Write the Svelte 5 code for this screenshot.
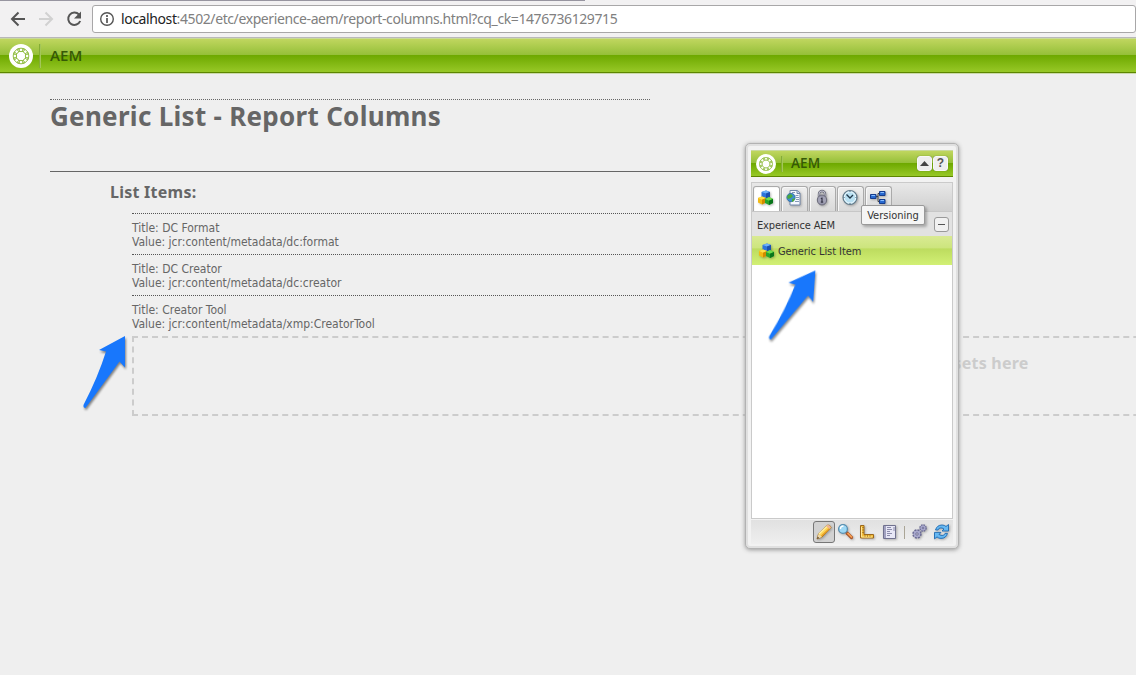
<script>
  const items = [
    ['DC Format', 'jcr:content/metadata/dc:format'],
    ['DC Creator', 'jcr:content/metadata/dc:creator'],
    ['Creator Tool', 'jcr:content/metadata/xmp:CreatorTool']
  ];
  const tabs = ['cubes', 'page', 'lock', 'clock', 'tree'];
</script>

{#snippet logo(size)}
  <svg width={size} height={size} viewBox="0 0 24 24">
    <circle cx="12" cy="12" r="12" fill="#fff" />
    <g fill="none" stroke="#83b52b" stroke-width=".9">
      {#each [0, 45, 90, 135, 180, 225, 270, 315] as a}
        <ellipse cx="12" cy="5.900" rx="3.600" ry="1.700" transform="rotate({a} 12 12)" />
      {/each}
    </g>
  </svg>
{/snippet}

{#snippet icon(name)}
  <svg class="icon" width="18" height="18" viewBox="0 0 18 18">
    {#if name === 'cubes'}
      <path d="M4.500 3l4.500-1.500 4 1.500v5l-4 2-4.500-2z" fill="#2c74dc" />
      <path d="M4.500 3l4.500-1.500 4 1.500-4 1.600z" fill="#6eb0fa" />
      <path d="M9 4.600L13 3v5l-4 2z" fill="#1b4fae" />
      <path d="M1 9l4-1.500 4 1.500v4.500l-4 2-4-2z" fill="#f2b913" />
      <path d="M1 9l4-1.500 4 1.500-4 1.700z" fill="#ffe04a" />
      <path d="M5 10.700l4-1.700v4.500l-4 2z" fill="#d28a00" />
      <path d="M8 10l4-2 4 2v4l-4 2-4-2z" fill="#27a52a" />
      <path d="M8 10l4-2 4 2-4 1.800z" fill="#6fdc4e" />
      <path d="M12 11.800l4-1.800v4l-4 2z" fill="#08751b" />
    {:else if name === 'page'}
      <path d="M5 1.500h7.500l2.500 2.500v12H5z" fill="#f5f8ff" stroke="#7186aa" />
      <path d="M12 1.500v3h3" fill="#cbd8ec" stroke="#7186aa" />
      <path d="M7 3.500h3M10.500 6.500h3M11 8.500h3M11 10.500h3M10 12.500h4" stroke="#8498b8" />
      <circle cx="6" cy="8.500" r="4.200" fill="#3c8ed2" stroke="#2c6299" stroke-width=".7" />
      <path d="M3 6l3-1 2 2-2 2-3 1-1-2zM7 10l3-1-1 3-2 1z" fill="#4ba83e" />
    {:else if name === 'lock'}
      <path d="M6 8V5a3 3 0 0 1 6 0v3" fill="none" stroke="#70717f" stroke-width="2.400" />
      <path d="M6 8V5a3 3 0 0 1 6 0v3" fill="none" stroke="#c0c0ce" />
      <ellipse cx="9" cy="11" rx="4.700" ry="5" fill="#9595aa" stroke="#686877" />
      <path d="M5.500 9h7M5 11h8M5.500 13h7" stroke="#c2c2d0" stroke-width=".6" />
      <path d="M9 8.500v5M7.800 9.500h1.500M7.800 13.200h2.400" stroke="#343446" stroke-width="1.200" />
    {:else if name === 'clock'}
      <circle cx="9" cy="8.500" r="7" fill="#b9e0f2" stroke="#627988" stroke-width="1.200" />
      <circle cx="9" cy="8.500" r="5.700" fill="none" stroke="#effaff" />
      <path d="M5.500 5.500L9 9l3-3" fill="none" stroke="#21384a" stroke-width="1.300" />
      <path d="M9 2v1M9 14v1M2.500 8.500h1M14.500 8.500h1" stroke="#496577" />
    {:else if name === 'tree'}
      <path d="M6 7.500h3M9 4.500v8h3M9 4.500h3" fill="none" stroke="#444" />
      <path d="M1.500 5.500h5.500v4H1.500zM10.500 2.500h5.500v4h-5.500zM10.500 10.500h5.500v4h-5.500z" fill="#2869d0" stroke="#153c8c" />
      <path d="M2.500 6.500h3.500M11.500 3.500h3.500M11.500 11.500h3.500" stroke="#87bdff" />
    {:else if name === 'pencil'}
      <path d="M2 16l1.500-5L12.500 2Q15 1.500 16 4.500L7 14z" fill="#ffd453" stroke="#a76d14" stroke-width=".9" />
      <path d="M4 11L13 2.500" stroke="#fff0a3" stroke-width="1.400" />
      <path d="M6.500 13L15 5" stroke="#e49d27" stroke-width="1.400" />
      <path d="M12.500 2Q15 1.500 16 4.500l-1.500 1.400-3.300-2.700z" fill="#edb494" />
      <path d="M2 16l1.500-5L7 14z" fill="#ead6ad" />
      <path d="M2 16l.700-2.200 1.500 1.200z" fill="#43301f" />
    {:else if name === 'zoom'}
      <path d="M10 10l4.500 4.500" stroke="#a7582e" stroke-width="3.200" stroke-linecap="round" />
      <path d="M10.500 10l4.500 4.500" stroke="#fba052" stroke-width="1.700" />
      <circle cx="6" cy="6" r="4.400" fill="#9dd8f5" stroke="#588eaf" stroke-width="1.300" />
      <path d="M3.500 6q0-3 3-3" fill="none" stroke="#fff" stroke-width="1.300" />
    {:else if name === 'ruler'}
      <path d="M1.500 2.500h3.500v9h9.500v3.500h-13z" fill="#f4bf3d" stroke="#9d691c" />
      <path d="M2.500 4v10h11" fill="none" stroke="#ffe797" />
      <path d="M3.500 4.500h1M3.500 7h1M3.500 9.500h1M6 12.500v1M8.500 12.500v1M11 12.500v1" stroke="#81571a" />
    {:else if name === 'sheet'}
      <path d="M2.500 2.500h12v13h-12z" fill="#e7e7f6" stroke="#70718f" />
      <path d="M4 3v12" stroke="#a2a2c0" stroke-width="2" />
      <path d="M6 4.500h4M6 6.500h5M6 8.500h3M6 10.500h5M6 12.500h3M13 4v4" stroke="#8c8cab" />
    {:else if name === 'gears'}
      <g fill="#a9a9ce" stroke="#6a6a94">
        <circle cx="6" cy="11" r="3.700" stroke-width="2" stroke-dasharray="1.900 1" />
        <circle cx="12" cy="5" r="2.800" stroke-width="2" stroke-dasharray="1.500 .700" />
        <circle cx="6" cy="11" r="3.200" stroke="none" />
        <circle cx="12" cy="5" r="2.500" stroke="none" />
        <circle cx="6" cy="11" r="1.200" fill="#eee" />
        <circle cx="12" cy="5" r=".8" fill="#eee" />
      </g>
    {:else}
      <g fill="#66b8f2" stroke="#1d69b1" stroke-width=".9" stroke-linejoin="round">
        {#each [0, 180] as a}
          <path d="M2.500 7Q4 2 9 2q2.500 0 4 1.500L15.500 1.500V8H9l2-2Q9 4.500 7 5 5.500 5.300 5 7z" transform="rotate({a} 8.500 8.700)" />
        {/each}
      </g>
    {/if}
  </svg>
{/snippet}

{#snippet arrow()}
  <svg width="60" height="82" viewBox="0 0 60 82">
    <path d="M50 6L24 20l7 1.500Q23 47 8.500 75q-.5 3 2 3Q31 50 44.500 31.500l5.500 6z" fill="#1877fc" />
  </svg>
{/snippet}

<div class="page">
  <header class="browser">
    <div class="strip"></div>
    <svg class="nav" width="84" height="20" viewBox="0 0 84 20">
      <g fill="none" stroke-width="2">
        <path d="M16 10H3M9.500 3.500L3 10l6.500 6.500" stroke="#555" />
        <path d="M30 10h13M36.500 3.500L43 10l-6.500 6.500" stroke="#d1d1d1" />
        <path d="M70 5.500a6.200 6.200 0 1 0 1.200 6.500" stroke="#555" />
      </g>
      <path d="M72 2.500v7h-7z" fill="#555" />
    </svg>
    <div class="address">
      <svg width="16" height="16" viewBox="0 0 16 16">
        <circle cx="8" cy="8" r="6.300" fill="none" stroke="#555" stroke-width="1.400" />
        <path d="M8 7v5M8 4v2" stroke="#555" stroke-width="1.700" />
      </svg>
      <span class="url"><b>localhost</b>:4502/etc/experience-aem/report-columns.html?cq_ck=1476736129715</span>
    </div>
  </header>
  <div class="brand">{@render logo(24)}<i></i><strong>AEM</strong></div>

  <main>
    <h1>Generic List - Report Columns</h1>
    <section>
      <h2>List Items:</h2>
      <ul>
        {#each items as [title, value]}
          <li><div>Title: {title}</div><div>Value: {value}</div></li>
        {/each}
      </ul>
      <div class="drop"><span>Drag components or assets here</span></div>
    </section>
  </main>

  <aside class="kick">
    <div class="brand small">
      {@render logo(20)}<i></i><strong>AEM</strong>
      <button class="up" aria-label="Collapse"><svg width="9" height="5"><path d="M0 5L4.500 0 9 5z" fill="#444" /></svg></button>
      <button>?</button>
    </div>
    <div class="body">
      <div class="tabs">
        {#each tabs as t, i}<div class="tab" class:active={i === 0}>{@render icon(t)}</div>{/each}
      </div>
      <div class="group"><span>Experience AEM</span><button aria-label="Collapse group"><em></em></button></div>
      <div class="entry">{@render icon('cubes')}<span>Generic List Item</span></div>
    </div>
    <footer>
      <div class="tool on">{@render icon('pencil')}</div>
      <div class="tool">{@render icon('zoom')}</div>
      <div class="tool">{@render icon('ruler')}</div>
      <div class="tool">{@render icon('sheet')}</div>
      <i></i>
      <div class="tool">{@render icon('gears')}</div>
      <div class="tool">{@render icon('refresh')}</div>
    </footer>
    <div class="tip">Versioning</div>
  </aside>
  <div class="arrow a1">{@render arrow()}</div>
  <div class="arrow a2">{@render arrow()}</div>
</div>

<style>
  * { box-sizing: border-box; }
  .page { position: relative; width: 1136px; height: 675px; overflow: hidden; background: #efefef; color: #666; font-family: "DejaVu Sans Condensed", "DejaVu Sans", sans-serif; font-stretch: condensed; }
  svg { display: block; flex: none; }
  .browser { position: relative; height: 38px; background: #f2f1f2; border-bottom: 1px solid #b9b8b9; display: flex; align-items: flex-start; }
  .strip { position: absolute; left: 0; top: 0; width: 585px; height: 1px; background: #9795a0; }
  .nav { margin: 9px 0 0 9px; width: 84px; }
  .address { margin: 5px 0 0 -1px; width: 1060px; height: 28px; background: #fff; border: 1px solid #a8a7a8; border-radius: 3px; display: flex; align-items: center; padding: 0 0 0 6px; gap: 6px; }
  .url { font: 14px/20px "Noto Sans", sans-serif; letter-spacing: -.4px; color: #808080; white-space: nowrap; }
  .url b { font-weight: 400; color: #222; }
  .brand { height: 35px; display: flex; align-items: center; padding-left: 9px; background: linear-gradient(#c0d65f 0, #94bf38 49%, #6ea900 50%, #97c827 100%); border-top: 1px solid #c9d99c; border-bottom: 1px solid #5d8600; box-shadow: 0 1px #cbd9ac; color: #365906; }
  .brand i { width: 2px; height: 24px; margin: 0 9px 0 6px; background: linear-gradient(90deg, #759f22, #b3d46a); }
  .brand strong { font: 600 15px/20px "Open Sans", sans-serif; letter-spacing: .1px; padding-bottom: 2px; }
  main { padding: 26px 0 0 50px; }
  h1 { margin: 0; width: 600px; height: 72px; border-top: 1px dotted #666; font: 700 26px/32px "Noto Sans", sans-serif; letter-spacing: .29px; white-space: nowrap; }
  section { width: 660px; border-top: 1px solid #666; padding-left: 60px; }
  h2 { margin: 0; height: 41px; padding-top: 10px; font: 700 16px/20px "Noto Sans", sans-serif; letter-spacing: .25px; }
  ul { list-style: none; margin: 0 0 0 22px; padding: 0; }
  li { height: 41px; border-top: 1px dotted #555; padding-top: 7px; font-size: 12px; line-height: 14px; white-space: nowrap; }
  .drop { margin-left: 22px; width: 1528px; height: 80px; border: 2px dashed #ccc; padding: 15px 0 0; text-align: center; font: 700 16px/20px "Noto Sans", sans-serif; letter-spacing: .25px; color: #ccc; }
  .kick { position: absolute; left: 745px; top: 143px; width: 214px; height: 406px; border: 1px solid #b2b2b2; border-radius: 5px; padding: 6px 5px 5px; background: #f2f2f2; box-shadow: inset 0 0 0 2px #e0e0e0, 0 1px 4px #999; font-size: 11px; color: #333; }
  .small { height: 27px; padding: 0 5px 0 5px; box-shadow: none; }
  .small i { height: 16px; margin: 0 8px 0 5px; }
  .small strong { font-size: 13.500px; margin-right: auto; padding-bottom: 1px; }
  button { width: 15px; height: 15px; padding: 0; border: 1px solid #f8f8f8; border-radius: 3px; background: #eee; font: 700 12px/13px "Liberation Sans", sans-serif; color: #555; display: flex; align-items: center; justify-content: center; }
  .small button { margin-left: 1px; box-shadow: 0 0 1px #536b24; }
  .body { margin-top: 5px; height: 337px; border: 1px solid #cacaca; background: #fff; }
  .tabs { height: 28px; padding: 3px 0 0 1px; display: flex; gap: 1px; background: linear-gradient(#e8e8e8, #cfcfcf); }
  .tab { width: 27px; height: 25px; border: 1px solid #aaa; border-bottom: 0; border-radius: 3px 3px 0 0; background: linear-gradient(#eee, #d9d9d9); box-shadow: inset 1px 1px #f8f8f8; padding: 2px 3px; }
  .tab.active { background: #fff; }
  .group { height: 25px; background: #e2e2e2; border-top: 1px solid #c7c7c7; padding: 0 3px 0 5px; display: flex; align-items: center; justify-content: space-between; }
  .group span { padding-top: 3px; letter-spacing: -.15px; }
  .group button { border-color: #999; background: #f1f1f1; }
  .group em { width: 7px; height: 1px; background: #555; }
  .entry { height: 29px; display: flex; align-items: center; padding-left: 6px; gap: 2px; letter-spacing: -.07px; background: linear-gradient(#d9ea93 0, #cde57e 40%, #bddc5f 45%, #d2f075 100%); }
  .entry span { padding-top: 1px; }
  footer { height: 24px; margin-top: 1px; background: linear-gradient(#e1e1e1, #efefef); display: flex; justify-content: flex-end; align-items: center; }
  .tool { width: 22px; height: 22px; padding: 1px 1px; border: 1px solid transparent; border-radius: 3px; }
  .tool.on { background: #d2d2d2; border-color: #777; }
  footer i { width: 1px; height: 13px; margin: 0 4px 0 3px; background: #aaa596; }
  .icon { filter: drop-shadow(1px 1px 1px #0004); }
  .tip { position: absolute; left: 115px; top: 61px; width: 64px; height: 20px; border: 1px solid #999; border-radius: 2px; background: #f5f5f5; box-shadow: 2px 2px 3px #0004; font-size: 11px; line-height: 19px; text-align: center; }
  .arrow { position: absolute; filter: drop-shadow(1px 2px 1px #0007); }
  .a1 { left: 75px; top: 330px; }
  .a2 { left: 763px; top: 263px; transform: rotate(4deg); }
</style>
